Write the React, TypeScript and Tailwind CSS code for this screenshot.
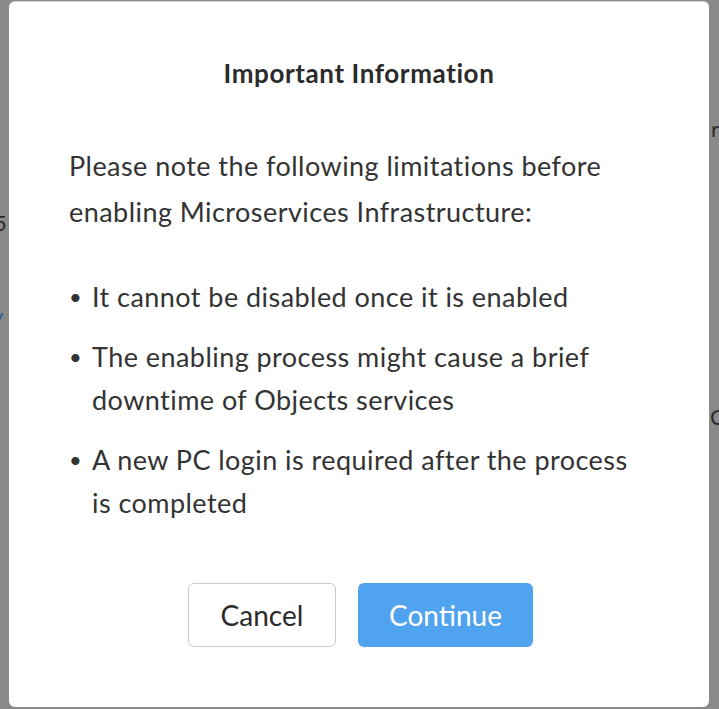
const items = [
  ["It cannot be disabled once it is enabled"],
  ["The enabling process might cause a brief", "downtime of Objects services"],
  ["A new PC login is required after the process", "is completed"],
];

const App = () => {
  return (
    <div className="relative h-[709px] w-[719px] overflow-hidden bg-[#8a8a8a] font-['Lato',sans-serif]">
      <span className="absolute left-[-6px] top-[212px] text-[22px] leading-none text-[#2a2a2a]">5</span>
      <span className="absolute left-[-8px] top-[305px] text-[22px] leading-none text-[#2f5f98]">y</span>
      <span className="absolute left-[711px] top-[118px] text-[22px] leading-none text-[#2a2a2a]">r</span>
      <span className="absolute left-[710px] top-[406px] text-[22px] leading-none text-[#2a2a2a]">C</span>

      <div className="relative ml-[9px] mt-px flex h-[706px] w-[700px] flex-col rounded-md border-t border-[#d6d6d6] bg-white text-[#333]">
        <h2 className="pt-[57px] text-center text-[26px] font-bold leading-[28px] tracking-[0.6px] text-[#2b2b2b]">
          Important Information
        </h2>

        <p className="mt-[56px] pl-[60px] text-[27px] leading-[46px] tracking-[0.45px]">
          Please note the following limitations before
          <br />
          enabling Microservices Infrastructure:
        </p>

        <ul className="mt-[40px] flex flex-col gap-[17px] pl-[60px]">
          {items.map((lines) => (
            <li key={lines[0]} className="flex text-[27px] leading-[43px] tracking-[0.45px]">
              <span className="w-[23px] shrink-0 text-[22px]">•</span>
              <span>
                {lines.map((line, i) => (
                  <span key={i} className="block">
                    {line}
                  </span>
                ))}
              </span>
            </li>
          ))}
        </ul>

        <div className="mt-[59px] flex justify-center gap-[22px] pl-[3px]">
          <button className="h-[64px] w-[148px] rounded-md border border-[#c9c9c9] bg-white text-[28px] text-[#2b2b2b]">
            Cancel
          </button>
          <button className="h-[64px] w-[175px] rounded-md bg-[#4fa3ef] text-[28px] text-white">
            Continue
          </button>
        </div>
      </div>
    </div>
  );
};

export default App;
